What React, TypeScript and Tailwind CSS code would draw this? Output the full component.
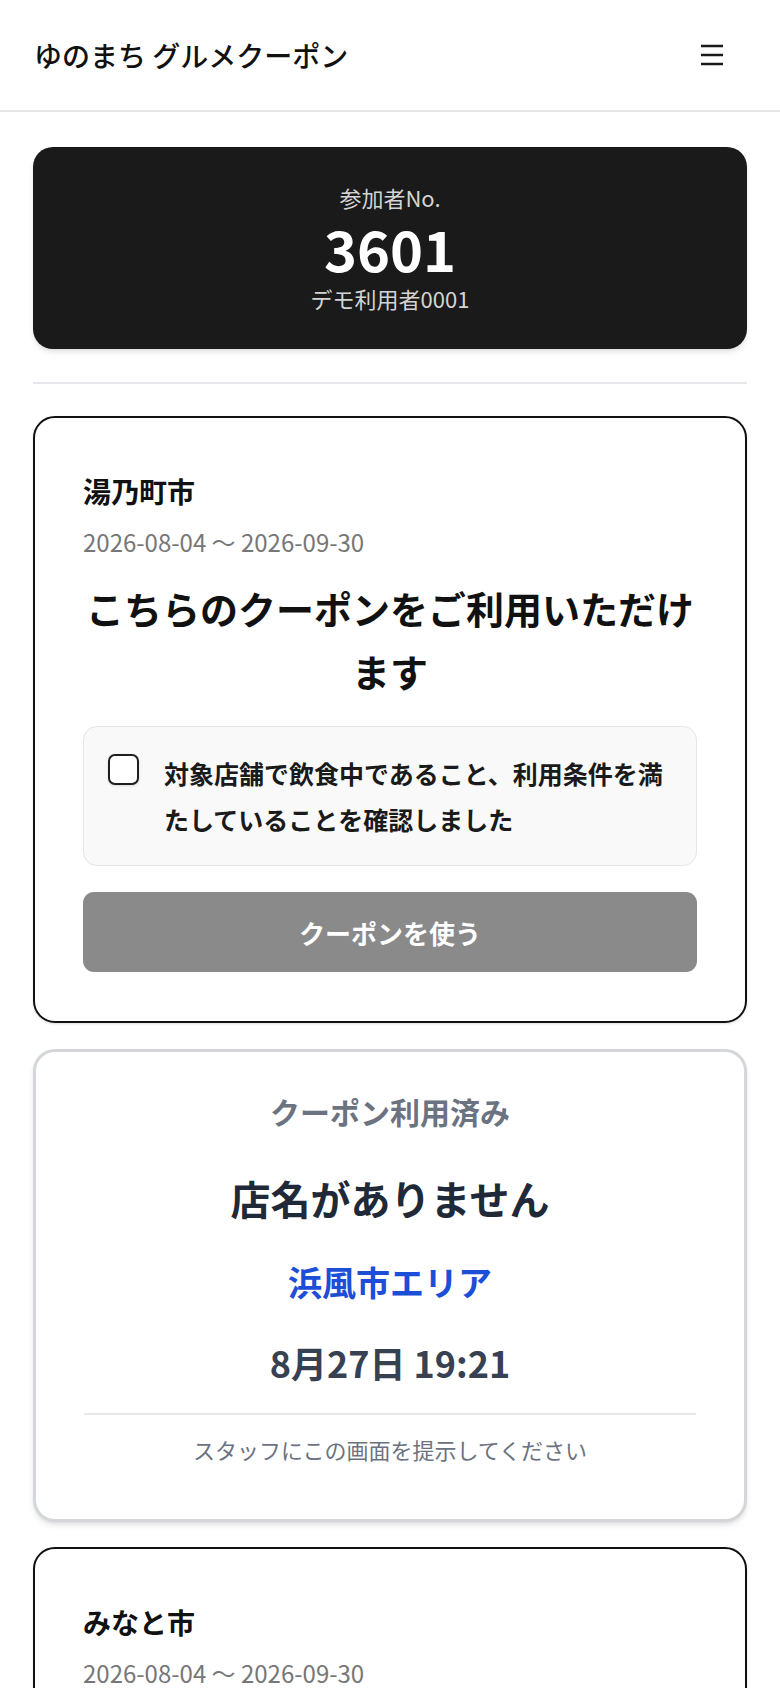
import { useState } from "react";

const font = "font-['Noto_Sans_CJK_JP','Noto_Sans',sans-serif]";

type Coupon = {
  city: string;
  period: string;
};

function MenuIcon() {
  return (
    <svg width="24" height="22" viewBox="0 0 24 22" fill="none" aria-hidden>
      <path d="M1 2h22M1 11h22M1 20h22" stroke="#1a1a1a" strokeWidth="2.4" />
    </svg>
  );
}

function AvailableCoupon({ coupon, open }: { coupon: Coupon; open: boolean }) {
  const [checked, setChecked] = useState(false);

  return (
    <section className="rounded-[22px] border-2 border-[#111] bg-white px-12 pt-[52px] pb-[49px] shadow-sm">
      <h2 className="text-[28px] font-semibold leading-[42px] text-[#111]">{coupon.city}</h2>
      <p className="mt-[13px] text-[24px] leading-[33px] text-[#777]">{coupon.period}</p>

      {open && (
        <>
          <h3 className="mt-[18px] text-center text-[38px] font-bold leading-[63px] text-[#111]">
            こちらのクーポンをご利用いただけます
          </h3>

          <label className="mt-6 flex cursor-pointer items-start gap-[25px] rounded-[14px] border border-[#e6e6e6] bg-[#f9f9f9] px-6 py-[23px]">
            <input
              checked={checked}
              className="mt-[4px] h-[31px] w-[31px] shrink-0 appearance-none rounded-[7px] border-2 border-[#1f1f1f] bg-white shadow-sm checked:bg-[#1f1f1f]"
              onChange={(e) => setChecked(e.target.checked)}
              type="checkbox"
            />
            <span className="text-[25px] font-semibold leading-[46px] text-[#1a1a1a]">
              対象店舗で飲食中であること、利用条件を満たしていることを確認しました
            </span>
          </label>

          <button
            className={
              "mt-[26px] flex h-[80px] w-full items-center justify-center rounded-[11px] text-[26px] font-bold text-white " +
              (checked ? "bg-[#1a1a1a]" : "bg-[#8a8a8a]")
            }
            disabled={!checked}
            type="button"
          >
            クーポンを使う
          </button>
        </>
      )}
    </section>
  );
}

function UsedCoupon() {
  return (
    <section className="rounded-[22px] border-[3px] border-[#d4d6da] bg-white px-12 pt-[37px] pb-[53px] text-center shadow-md">
      <p className="text-[30px] font-semibold leading-[45px] text-[#6b7280]">クーポン利用済み</p>
      <p className="mt-[34px] text-[40px] font-bold leading-[60px] text-[#1f2937]">店名がありません</p>
      <p className="mt-[28px] text-[34px] font-bold leading-[51px] text-[#1d4ed8]">浜風市エリア</p>
      <p className="mt-[28px] text-[36px] font-bold leading-[54px] text-[#374151]">8月27日 19:21</p>
      <div className="mt-6 border-t-2 border-[#e5e7eb] pt-[18px]">
        <p className="text-[22px] leading-[33px] text-[#6b7280]">スタッフにこの画面を提示してください</p>
      </div>
    </section>
  );
}

export default function App() {
  const period = "2026-08-04 〜 2026-09-30";

  return (
    <div className={`min-h-screen bg-white ${font}`}>
      <header className="flex h-[112px] items-center justify-between border-b-2 border-[#e5e5e5] px-[34px]">
        <h1 className="text-[28px] font-medium text-[#111]">ゆのまち グルメクーポン</h1>
        <button className="mr-[22px]" type="button" aria-label="メニュー">
          <MenuIcon />
        </button>
      </header>

      <main className="px-[33px] pt-[35px] pb-10">
        <div className="rounded-[20px] bg-[#1a1a1a] pt-[34px] pb-[34px] text-center shadow-md">
          <p className="text-[22px] leading-[33px] text-[#d4d4d4]">参加者No.</p>
          <p className="my-[4px] text-[56px] font-semibold leading-[60px] text-white">3601</p>
          <p className="text-[22px] leading-[33px] text-[#d4d4d4]">デモ利用者0001</p>
        </div>

        <div className="mt-[33px] h-[2px] bg-[#e5e7eb]" />

        <div className="mt-[32px] flex flex-col">
          <AvailableCoupon coupon={{ city: "湯乃町市", period }} open />
          <div className="mt-[26px]">
            <UsedCoupon />
          </div>
          <div className="mt-[25px]">
            <AvailableCoupon coupon={{ city: "みなと市", period }} open />
          </div>
        </div>
      </main>
    </div>
  );
}
